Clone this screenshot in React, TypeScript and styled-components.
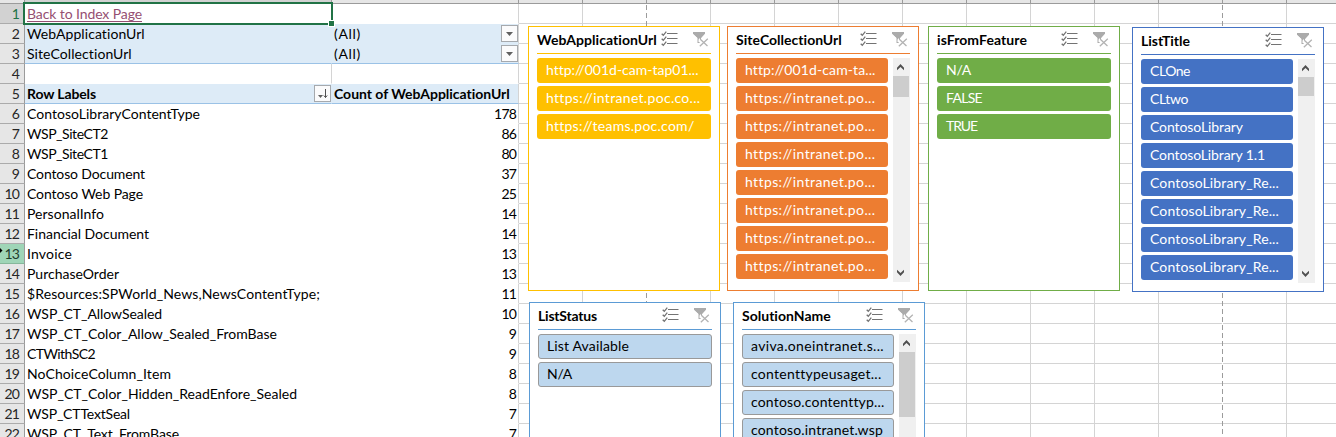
import React, { useLayoutEffect, useRef, useState } from 'react';
import styled, { createGlobalStyle, css } from 'styled-components';

const Global = createGlobalStyle`
  *, *::before, *::after { box-sizing: border-box; }
  body { margin: 0; background: #fff; overflow: hidden; }
`;

const Sheet = styled.main`
  position: relative;
  width: 1336px;
  height: 437px;
  overflow: hidden;
  background: #fff;
  color: #000;
  font: 14px/19px Lato, Carlito, Calibri, sans-serif;
`;

const GridRow = styled.div`
  display: flex;
  height: 20px;
`;

const HeaderStrip = styled.div`
  display: flex;
  height: 4px;
  background: #e6e6e6;
  border-bottom: 1px solid #9b9b9b;
`;

const HeaderCell = styled.div<{ $w: number; $selected?: boolean }>`
  flex: none;
  width: ${p => p.$w}px;
  border-right: 1px solid #9b9b9b;
  background: ${p => (p.$selected ? '#d2d2d2' : '#e6e6e6')};
`;

const RowNumber = styled.div<{ $state?: 'selected' | 'hover' }>`
  flex: none;
  width: 25px;
  padding-right: 5px;
  text-align: right;
  line-height: 19px;
  border-right: 1px solid #9b9b9b;
  border-bottom: 1px solid #ababab;
  background: #e6e6e6;
  color: #262626;
  ${p => p.$state === 'selected' && css`background: #d2d2d2; color: #217346;`}
  ${p => p.$state === 'hover' && css`background: #9fd5b7; color: #1f3d2c; border-bottom-color: #86b89b;`}
`;

type Tone = 'plain' | 'filter' | 'filterEnd' | 'empty' | 'heading' | 'body';

const PivotCell = styled.div<{ $w: number; $tone: Tone; $right?: boolean; $last?: boolean }>`
  flex: none;
  display: flex;
  align-items: flex-start;
  justify-content: ${p => (p.$right ? 'flex-end' : 'flex-start')};
  width: ${p => p.$w}px;
  padding: 1px 2px 0;
  line-height: 18px;
  border-right: 1px solid ${p => (p.$last || p.$tone === 'empty' || p.$tone === 'plain' ? '#d4d4d4' : 'transparent')};
  border-bottom: 1px solid transparent;
  ${p => (p.$tone === 'filter' || p.$tone === 'filterEnd' || p.$tone === 'heading') && css`
    background: #ddebf7;
    border-right-color: ${p.$last ? '#d4d4d4' : '#ddebf7'};
    border-bottom-color: ${p.$tone === 'filter' ? '#ddebf7' : '#9bc2e6'};
  `}
  ${p => p.$tone === 'heading' && css`font-weight: 700;`}
`;

const BlankCell = styled.div<{ $dashed?: boolean }>`
  flex: none;
  width: 64px;
  border-bottom: 1px solid #d4d4d4;
  border-right: 1px ${p => (p.$dashed ? 'solid transparent' : 'solid #d4d4d4')};
`;

const PageBreak = styled.div<{ $x: number }>`
  position: absolute;
  top: 5px;
  bottom: 0;
  left: ${p => p.$x}px;
  width: 1px;
  background: repeating-linear-gradient(#9b9b9b 0 5px, #fff 5px 8px);
`;

const Selection = styled.div`
  position: absolute;
  left: 23px;
  top: 2px;
  width: 310px;
  height: 23px;
  border: 2px solid #217346;
  &::after {
    content: '';
    position: absolute;
    right: -4px;
    bottom: -4px;
    width: 7px;
    height: 7px;
    background: #217346;
    border: 1px solid #fff;
  }
`;

const CellButton = styled.span`
  display: flex;
  flex: none;
  width: 17px;
  height: 17px;
  margin: 0 -2px 0 auto;
  border: 1px solid #a6a9ad;
  background: #fbfbfc;
`;

const LinkText = styled.span`
  color: #954f72;
  border-bottom: 1px solid #954f72;
  height: 17px;
`;

const CursorTip = styled.svg`
  position: absolute;
  left: 0;
  top: 247px;
`;

const FitSpan = styled.span`
  display: inline-block;
  white-space: pre;
`;

/* Spreads its text over the given advance width. */
function Fit({ w, children }: { w: number; children: string }) {
  const ref = useRef<HTMLSpanElement>(null);
  const [spacing, setSpacing] = useState(0);
  useLayoutEffect(() => {
    if (ref.current) setSpacing((w - ref.current.getBoundingClientRect().width) / children.length);
  }, []);
  return <FitSpan ref={ref} style={{ letterSpacing: spacing }}>{children}</FitSpan>;
}

const Panel = styled.section<{ $x: number; $y: number; $color: string }>`
  position: absolute;
  left: ${p => p.$x}px;
  top: ${p => p.$y}px;
  width: 192px;
  height: 265px;
  padding: 0 8px;
  border: 1px solid ${p => p.$color};
  background: #fff;
`;

const PanelHeader = styled.header<{ $color: string }>`
  display: flex;
  height: 27px;
  border-bottom: 1px solid ${p => p.$color};
  font-weight: 700;
  line-height: 26px;
`;

const PanelTools = styled.div`
  display: flex;
  gap: 15px;
  margin: 4px 2px 0 auto;
  line-height: 0;
`;

const PanelBody = styled.div`
  display: flex;
  gap: 5px;
  padding-top: 4px;
`;

const Items = styled.div`
  flex: 1;
  display: flex;
  flex-direction: column;
  gap: 3px;
`;

const Item = styled.div<{ $fill: string; $light?: boolean }>`
  height: 25px;
  padding-left: ${p => (p.$light ? 8 : 9)}px;
  border-radius: 3px;
  line-height: 23px;
  background: ${p => p.$fill};
  color: ${p => (p.$light ? '#000' : '#fff')};
  ${p => p.$light && css`border: 1px solid #999; line-height: 22px;`}
`;

const Scrollbar = styled.div`
  display: flex;
  flex-direction: column;
  align-items: flex-start;
  width: 17px;
  height: 224px;
  background: #f0f0f0;
`;

const ScrollArrow = styled.svg<{ $down?: boolean }>`
  flex: none;
  display: block;
  margin-top: ${p => (p.$down ? 'auto' : 0)};
  ${p => p.$down && css`transform: scaleY(-1);`}
`;

const Thumb = styled.div<{ $h: number }>`
  width: 16px;
  height: ${p => p.$h}px;
  background: #cdcdcd;
`;

const Arrow = ({ down }: { down?: boolean }) => (
  <ScrollArrow $down={down} width="17" height="18" viewBox="0 0 17 18">
    <path d="M4 9.8 7.5 6 11 9.8V12.3L7.5 9 4 12.3Z" fill="#505050" />
  </ScrollArrow>
);

const MultiSelectIcon = () => (
  <svg width="17" height="16" viewBox="0 0 17 16" fill="none">
    <path d="M6 2.5H16.5M6 7.5H16.5M6 12.5H16.5" stroke="#737373" />
    <path d="M.7 2.7 2.3 4.3 5.3.6M.7 7.7 2.3 9.3 5.3 5.6M.7 12.7 2.3 14.3 5.3 10.6" stroke="#737373" strokeWidth="1.3" />
  </svg>
);

const ClearFilterIcon = () => (
  <svg width="16" height="16" viewBox="0 0 16 16">
    <path d="M0 1H12V2.5L8 7V8.2L7 9V7L5.5 8.5V11H6.6V12H4.5V6.8L0 2.5Z" fill="#ababab" />
    <path d="M0 1H12V2.5L8 6.8H4.5L0 2.5Z" fill="#ababab" />
    <path d="M7.3 8.3 14.5 15M14.8 7.8 6.8 15.2" stroke="#b3b3b3" strokeWidth="1.3" fill="none" />
  </svg>
);

const DropIcon = () => (
  <svg width="15" height="15" viewBox="0 0 15 15">
    <path d="M4 6H11L7.5 10Z" fill="#606060" />
  </svg>
);

const SortIcon = () => (
  <svg width="15" height="15" viewBox="0 0 15 15">
    <path d="M3 9H8L5.5 12Z" fill="#606060" />
    <path d="M10.5 3V11.5M8.8 9.5 10.5 11.5 12.2 9.5" stroke="#505050" fill="none" />
  </svg>
);

type Entry = [string, number];

type SlicerProps = {
  x: number;
  y: number;
  color: string;
  title: Entry;
  items: Entry[];
  thumb?: number;
  fill?: string;
};

function Slicer({ x, y, color, title, items, thumb, fill }: SlicerProps) {
  return (
    <Panel $x={x} $y={y} $color={color}>
      <PanelHeader $color={color}>
        <Fit w={title[1]}>{title[0]}</Fit>
        <PanelTools><MultiSelectIcon /><ClearFilterIcon /></PanelTools>
      </PanelHeader>
      <PanelBody>
        <Items>
          {items.map(([text, w], i) => (
            <Item key={i} $fill={fill ?? color} $light={!!fill}><Fit w={w}>{text}</Fit></Item>
          ))}
        </Items>
        {thumb && <Scrollbar><Arrow /><Thumb $h={thumb} /><Arrow down /></Scrollbar>}
      </PanelBody>
    </Panel>
  );
}

const pivotRows: [string, number, string][] = [
  ['ContosoLibraryContentType', 173, '178'],
  ['WSP_SiteCT2', 81, '86'],
  ['WSP_SiteCT1', 81, '80'],
  ['Contoso Document', 118, '37'],
  ['Contoso Web Page', 116, '25'],
  ['PersonalInfo', 77, '14'],
  ['Financial Document', 122, '14'],
  ['Invoice', 45, '13'],
  ['PurchaseOrder', 92, '13'],
  ['$Resources:SPWorld_News,NewsContentType;', 293, '11'],
  ['WSP_CT_AllowSealed', 135, '10'],
  ['WSP_CT_Color_Allow_Sealed_FromBase', 250, '9'],
  ['CTWithSC2', 68, '9'],
  ['NoChoiceColumn_Item', 144, '8'],
  ['WSP_CT_Color_Hidden_ReadEnfore_Sealed', 270, '8'],
  ['WSP_CTTextSeal', 103, '7'],
  ['WSP_CT_Text_FromBase', 152, '7'],
];

const repeat = (text: string, w: number, n: number): Entry[] => Array.from({ length: n }, () => [text, w] as Entry);

const slicers: SlicerProps[] = [
  {
    x: 528, y: 26, color: '#ffc000', title: ['WebApplicationUrl', 120],
    items: [['http://001d-cam-tap01...', 152], ['https://intranet.poc.co...', 154], ['https://teams.poc.com/', 148]],
  },
  {
    x: 727, y: 26, color: '#ed7d31', title: ['SiteCollectionUrl', 106], thumb: 21,
    items: [['http://001d-cam-ta...', 130], ...repeat('https://intranet.po...', 130, 7)],
  },
  {
    x: 928, y: 26, color: '#70ad47', title: ['isFromFeature', 90],
    items: [['N/A', 25], ['FALSE', 36], ['TRUE', 31]],
  },
  {
    x: 1132, y: 27, color: '#4472c4', title: ['ListTitle', 49], thumb: 19,
    items: [['CLOne', 40], ['CLtwo', 38], ['ContosoLibrary', 93], ['ContosoLibrary 1.1', 115], ...repeat('ContosoLibrary_Re...', 129, 4)],
  },
  {
    x: 529, y: 302, color: '#5b9bd5', fill: '#bdd7ee', title: ['ListStatus', 59],
    items: [['List Available', 82], ['N/A', 25]],
  },
  {
    x: 733, y: 302, color: '#5b9bd5', fill: '#bdd7ee', title: ['SolutionName', 89], thumb: 65,
    items: [['aviva.oneintranet.s...', 133], ['contenttypeusaget...', 130], ['contoso.contenttyp...', 133], ['contoso.intranet.wsp', 132]],
  },
];

const blankColumns = Array.from({ length: 13 }, (_, i) => i);

function Row({ n, tone, a, b, right }: { n: number; tone: Tone; a?: React.ReactNode; b?: React.ReactNode; right?: boolean }) {
  const label = String(n);
  return (
    <GridRow>
      <RowNumber $state={n === 1 ? 'selected' : n === 13 ? 'hover' : undefined}>
        <Fit w={label.length * 7.2}>{label}</Fit>
      </RowNumber>
      <PivotCell $w={307} $tone={tone}>{a}</PivotCell>
      <PivotCell $w={187} $tone={tone} $right={right} $last>{b}</PivotCell>
      {blankColumns.map(c => <BlankCell key={c} $dashed={c === 1 || c === 10} />)}
    </GridRow>
  );
}

export default function App() {
  const drop = <CellButton><DropIcon /></CellButton>;
  return (
    <>
      <Global />
      <Sheet>
        <HeaderStrip>
          <HeaderCell $w={25} />
          <HeaderCell $w={307} $selected />
          <HeaderCell $w={187} />
          {blankColumns.map(c => <HeaderCell key={c} $w={64} />)}
        </HeaderStrip>
        <Row n={1} tone="plain" a={<LinkText><Fit w={115}>Back to Index Page</Fit></LinkText>} />
        <Row n={2} tone="filter" a={<Fit w={118}>WebApplicationUrl</Fit>} b={<><Fit w={27}>(All)</Fit>{drop}</>} />
        <Row n={3} tone="filterEnd" a={<Fit w={105}>SiteCollectionUrl</Fit>} b={<><Fit w={27}>(All)</Fit>{drop}</>} />
        <Row n={4} tone="empty" />
        <Row
          n={5}
          tone="heading"
          a={<><Fit w={69}>Row Labels</Fit><CellButton><SortIcon /></CellButton></>}
          b={<Fit w={176}>Count of WebApplicationUrl</Fit>}
        />
        {pivotRows.map(([name, w, count], i) => (
          <Row key={name} n={i + 6} tone="body" right a={<Fit w={w}>{name}</Fit>} b={<Fit w={count.length * 7.3}>{count}</Fit>} />
        ))}
        <PageBreak $x={646} />
        <PageBreak $x={1222} />
        <Selection />
        <CursorTip width="3" height="7" viewBox="0 0 3 7">
          <path d="M0 1 2.5 3.5 0 6Z" fill="#000" />
        </CursorTip>
        {slicers.map(s => <Slicer key={s.title[0]} {...s} />)}
      </Sheet>
    </>
  );
}
